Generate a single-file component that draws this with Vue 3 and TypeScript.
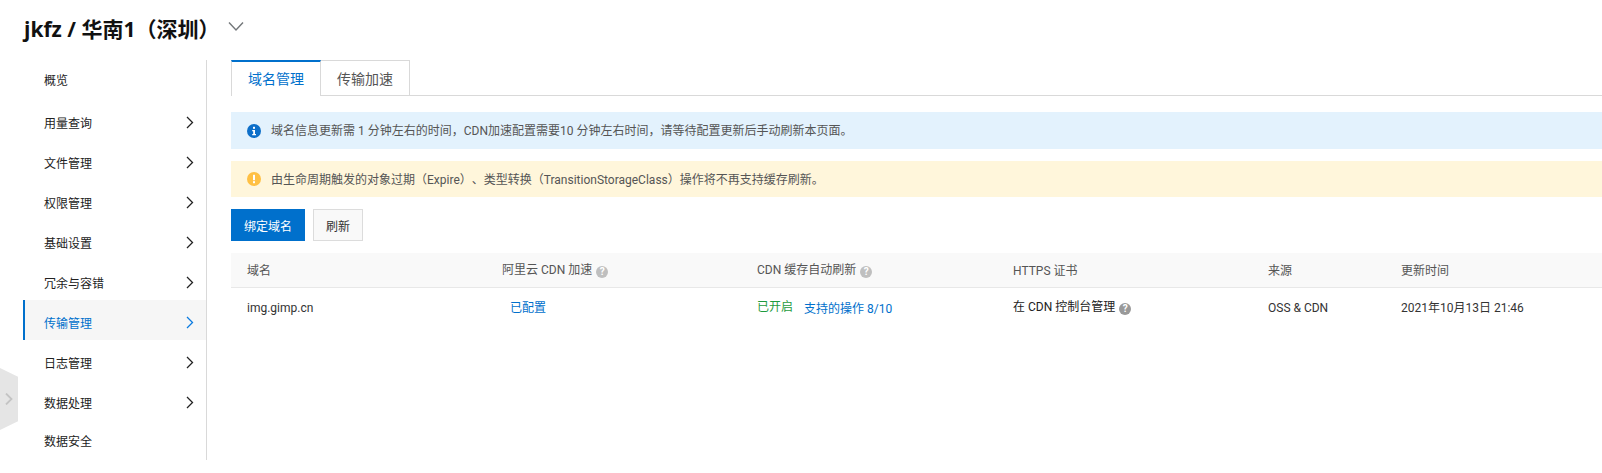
<template>
  <div class="page">
    <header class="title">
      <h1>jkfz / 华南1（深圳）</h1>
      <svg class="title-arrow" width="16" height="11" viewBox="0 0 16 11"><path d="M1 1.5 L8 9 L15 1.5" /></svg>
    </header>

    <div class="body">
      <aside class="side">
        <div
          v-for="item in menu"
          :key="item.name"
          class="side-item"
          :class="{ active: item.name === activeMenu, plain: !item.arrow }"
        >
          <span>{{ item.name }}</span>
          <svg v-if="item.arrow" width="8" height="13" viewBox="0 0 8 13"><path d="M1 1 L6.5 6.5 L1 12" /></svg>
        </div>
      </aside>

      <main class="main">
        <div class="tabs">
          <div class="tab active">域名管理</div>
          <div class="tab">传输加速</div>
        </div>

        <div class="notice info">
          <svg width="14" height="14" viewBox="0 0 14 14">
            <circle cx="7" cy="7" r="7" fill="#0d6fc9" />
            <rect x="6" y="2.8" width="2" height="2" fill="#fff" />
            <path d="M5.2 6 H8 V10 H9 V11.2 H5.2 V10 H6.2 V7.2 H5.2 Z" fill="#fff" />
          </svg>
          <span>域名信息更新需 1 分钟左右的时间，CDN加速配置需要10 分钟左右时间，请等待配置更新后手动刷新本页面。</span>
        </div>
        <div class="notice warn">
          <svg width="14" height="14" viewBox="0 0 14 14">
            <circle cx="7" cy="7" r="7" fill="#ffc043" />
            <rect x="6" y="2.8" width="2" height="5.4" fill="#fff" />
            <rect x="6" y="9.2" width="2" height="2" fill="#fff" />
          </svg>
          <span>由生命周期触发的对象过期（Expire）、类型转换（TransitionStorageClass）操作将不再支持缓存刷新。</span>
        </div>

        <div class="actions">
          <button class="btn primary">绑定域名</button>
          <button class="btn">刷新</button>
        </div>

        <div class="table">
          <div class="row head">
            <div v-for="col in columns" :key="col.title" class="cell">
              {{ col.title }}
              <span v-if="col.help" class="help">?</span>
            </div>
          </div>
          <div class="row">
            <div class="cell latin">img.gimp.cn</div>
            <div class="cell"><a class="link configured">已配置</a></div>
            <div class="cell">
              <span class="green">已开启</span>
              <a class="link ops">支持的操作 8/10</a>
            </div>
            <div class="cell dark">在 CDN 控制台管理 <span class="help dark-help">?</span></div>
            <div class="cell latin">OSS &amp; CDN</div>
            <div class="cell">2021年10月13日 21:46</div>
          </div>
        </div>
      </main>
    </div>

    <div class="collapse">
      <svg width="8" height="12" viewBox="0 0 8 12"><path d="M1 0.5 L6.5 6 L1 11.5" /></svg>
    </div>
  </div>
</template>

<script setup lang="ts">
const activeMenu = '传输管理'

const menu = [
  { name: '概览', arrow: false },
  { name: '用量查询', arrow: true },
  { name: '文件管理', arrow: true },
  { name: '权限管理', arrow: true },
  { name: '基础设置', arrow: true },
  { name: '冗余与容错', arrow: true },
  { name: '传输管理', arrow: true },
  { name: '日志管理', arrow: true },
  { name: '数据处理', arrow: true },
  { name: '数据安全', arrow: false }
]

const columns = [
  { title: '域名', help: false },
  { title: '阿里云 CDN 加速', help: true },
  { title: 'CDN 缓存自动刷新', help: true },
  { title: 'HTTPS 证书', help: false },
  { title: '来源', help: false },
  { title: '更新时间', help: false }
]
</script>

<style>
html,
body {
  margin: 0;
  background: #fff;
  overflow: hidden;
}
</style>

<style scoped>
.page {
  position: relative;
  width: 1602px;
  height: 473px;
  overflow: hidden;
  font-family: Roboto, "Noto Sans CJK SC", sans-serif;
  font-size: 12px;
  color: #333;
  text-spacing-trim: space-all;
}

.title {
  display: flex;
  align-items: center;
  height: 60px;
  padding-left: 24px;
  box-sizing: border-box;
}

.title h1 {
  margin: 0 0 3px;
  font-family: "Open Sans", "Noto Sans CJK SC", sans-serif;
  font-size: 21px;
  font-weight: 700;
  color: #111;
  line-height: 54px;
}

.title-arrow {
  margin-left: 9px;
  margin-bottom: 8px;
}

.title-arrow path {
  fill: none;
  stroke: #73777a;
  stroke-width: 1.4;
}

.body {
  display: flex;
}

.side {
  width: 183px;
  height: 400px;
  margin-left: 23px;
  border-right: 1px solid #d9d9d9;
  flex: none;
}

.side-item {
  display: flex;
  align-items: center;
  justify-content: space-between;
  height: 40px;
  padding: 4px 12px 0 21px;
  color: #222;
  box-sizing: border-box;
}

.side-item.plain {
  padding-top: 0;
}

.side-item:first-child {
  padding-bottom: 2px;
}

.side-item.active {
  background: #f6f6f6;
  color: #0070cc;
  box-shadow: inset 2px 0 0 #0070cc;
}

.side-item svg path {
  fill: none;
  stroke: #222;
  stroke-width: 1.3;
}

.side-item.active svg path {
  stroke: #0a7be0;
}

.main {
  flex: 1;
  margin-left: 24px;
  min-width: 0;
}

.tabs {
  display: flex;
  height: 36px;
  border-bottom: 1px solid #d9d9d9;
  box-sizing: border-box;
}

.tab {
  width: 89px;
  height: 36px;
  box-sizing: border-box;
  border: 1px solid #d9d9d9;
  border-left: 0;
  text-align: center;
  line-height: 36px;
  font-size: 14px;
  color: #555;
  background: #fff;
}

.tab.active {
  width: 90px;
  border-left: 1px solid #d9d9d9;
  border-top: 2px solid #0070cc;
  border-bottom: 0;
  color: #0070cc;
  line-height: 35px;
}

.notice {
  display: flex;
  align-items: center;
  gap: 10px;
  padding-left: 16px;
  color: #555;
  font-size: 12px;
}

.notice span {
  padding-bottom: 2px;
}

.notice.info {
  height: 37px;
  margin-top: 16px;
  background: #e3f2fd;
}

.notice.warn {
  height: 36px;
  margin-top: 12px;
  background: #fff6db;
}

.actions {
  display: flex;
  gap: 8px;
  margin-top: 12px;
}

.btn {
  height: 32px;
  width: 50px;
  padding: 0;
  box-sizing: border-box;
  border: 1px solid #dcdcdc;
  background: #f9f9f9;
  color: #333;
  font: inherit;
}

.btn.primary {
  width: 74px;
  border-color: #0070cc;
  background: #0070cc;
  color: #fff;
}

.table {
  margin-top: 12px;
}

.row {
  display: grid;
  grid-template-columns: 255px 255px 256px 255px 133px 1fr;
  padding-left: 16px;
  height: 36px;
  align-items: center;
  color: #333;
}

.row.head {
  height: 35px;
  padding-bottom: 2px;
  background: #f9f9f9;
  border-bottom: 1px solid #e8e8e8;
  box-sizing: border-box;
  color: #555;
}

.cell {
  white-space: nowrap;
}

.latin {
  padding-top: 4px;
}

.dark {
  color: #222;
}

.help {
  display: inline-block;
  width: 12px;
  height: 12px;
  margin-left: 1px;
  border-radius: 50%;
  background: #bfbfbf;
  color: #fff;
  font-size: 10px;
  font-weight: 700;
  line-height: 12px;
  text-align: center;
  vertical-align: -1px;
}

.dark-help {
  background: #999;
}

.link {
  color: #0070cc;
}

.configured {
  margin-left: 8px;
}

.ops {
  margin-left: 11px;
  position: relative;
  top: 1px;
}

.green {
  color: #1e9b3e;
  position: relative;
  top: -1px;
}

.collapse {
  position: absolute;
  left: 0;
  top: 368px;
  width: 18px;
  height: 62px;
  background: #e5e5e5;
  clip-path: polygon(0 0, 100% 14%, 100% 86%, 0 100%);
  display: flex;
  align-items: center;
  padding-left: 5px;
  box-sizing: border-box;
}

.collapse path {
  fill: none;
  stroke: #c4c4c4;
  stroke-width: 1.8;
}
</style>
